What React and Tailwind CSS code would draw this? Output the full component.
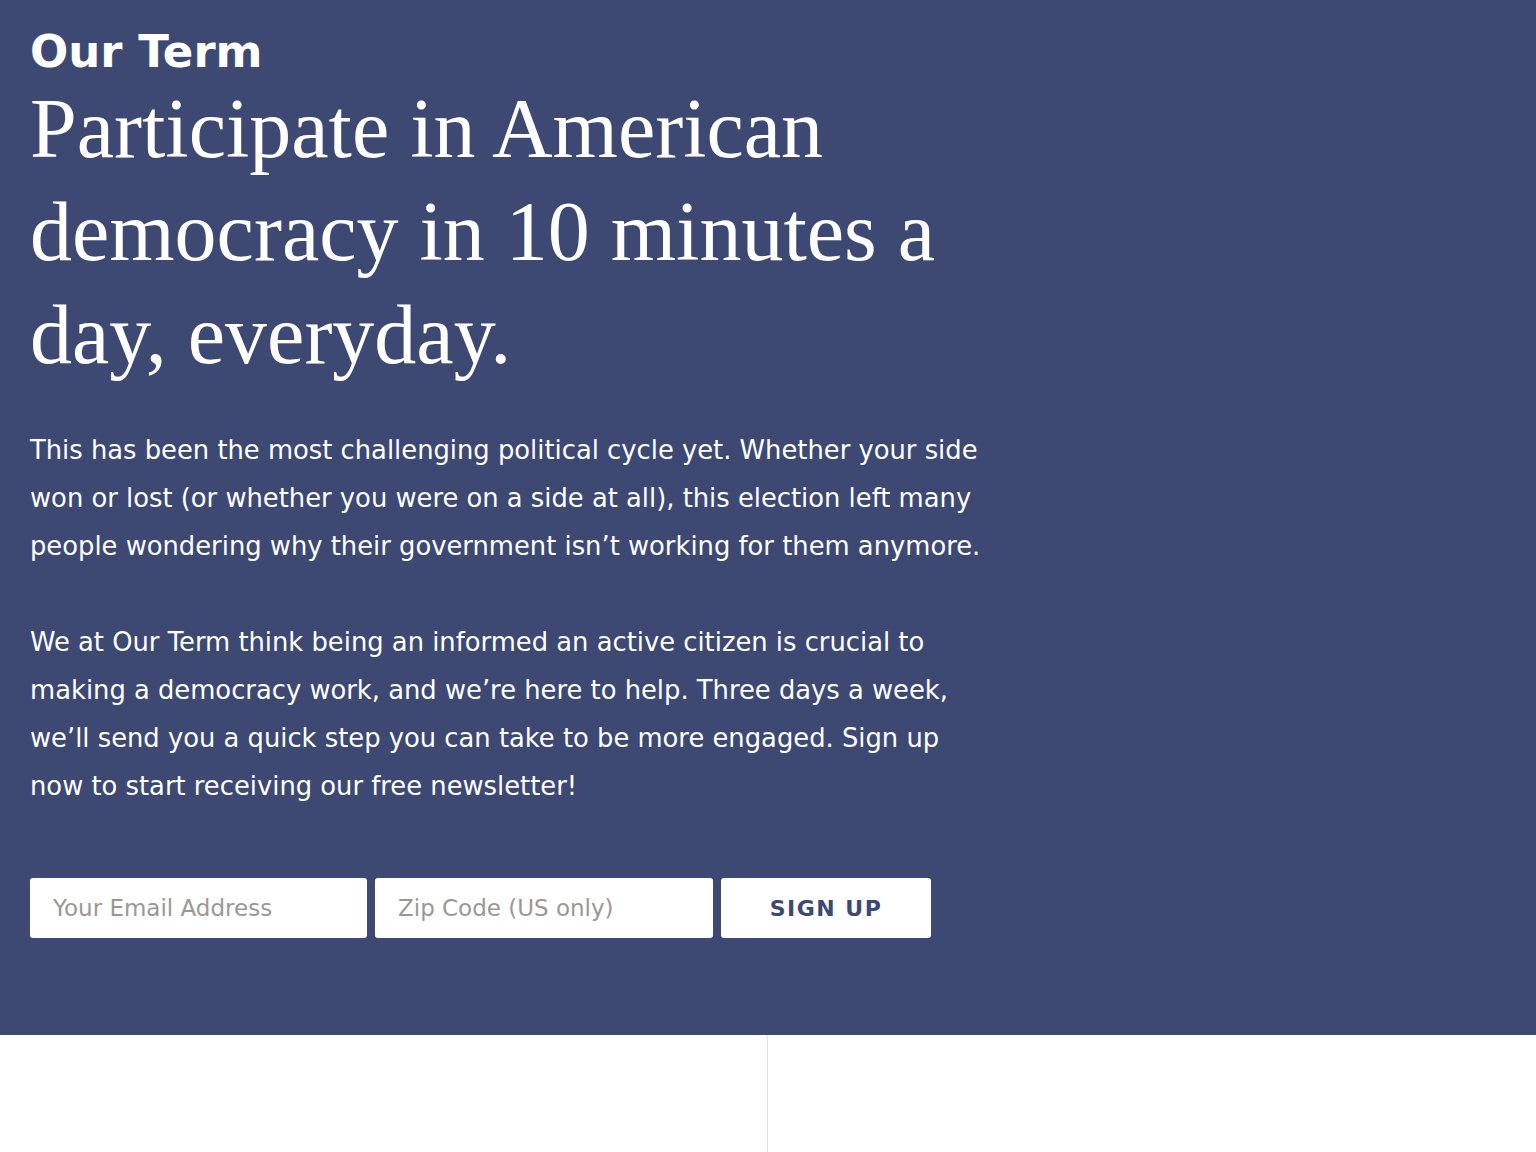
import React from "react";

export default function App() {
  return (
    <div className="min-h-screen bg-white" style={{ fontFamily: "'DejaVu Sans', sans-serif" }}>
      {/* Hero / signup */}
      <section className="bg-[#3d4873] text-white pl-[30px] pt-[30px] pb-[97px]">
        <h2 className="text-[45px] leading-[44px] font-bold">Our Term</h2>

        <h1
          className="mt-[3px] text-[84px] leading-[103px] font-normal"
          style={{ fontFamily: "'Liberation Serif', 'DejaVu Serif', serif" }}
        >
          Participate in American
          <br />
          democracy in 10 minutes a
          <br />
          day, everyday.
        </h1>

        <div className="mt-[40px] max-w-[962px] text-[25.8px] leading-[48px]">
          <p>
            This has been the most challenging political cycle yet. Whether your side won or lost
            (or whether you were on a side at all), this election left many people wondering why
            their government isn’t working for them anymore.
          </p>
          <p className="mt-[48px]">
            We at Our Term think being an informed an active citizen is crucial to making a
            democracy work, and we’re here to help. Three days a week, we’ll send you a quick step
            you can take to be more engaged. Sign up now to start receiving our free newsletter!
          </p>
        </div>

        {/* Form row */}
        <form className="mt-[68px] flex gap-2" onSubmit={(e) => e.preventDefault()}>
          <input
            type="email"
            placeholder="Your Email Address"
            className="w-[337px] h-[60px] rounded-[3px] bg-white px-[23px] text-[23px] text-gray-800 placeholder:text-[#9c9792] outline-none"
          />
          <input
            type="text"
            placeholder="Zip Code (US only)"
            className="w-[338px] h-[60px] rounded-[3px] bg-white px-[23px] text-[23px] text-gray-800 placeholder:text-[#9c9792] outline-none"
          />
          <button
            type="submit"
            className="w-[210px] h-[60px] rounded-[3px] bg-white text-[#3d4873] text-[22px] font-bold tracking-[1.5px] uppercase"
          >
            Sign Up
          </button>
        </form>
      </section>

      {/* Lower columns */}
      <section className="grid grid-cols-2 h-[117px]">
        <div className="border-r border-[#e2e2e2]"></div>
        <div></div>
      </section>
    </div>
  );
}
